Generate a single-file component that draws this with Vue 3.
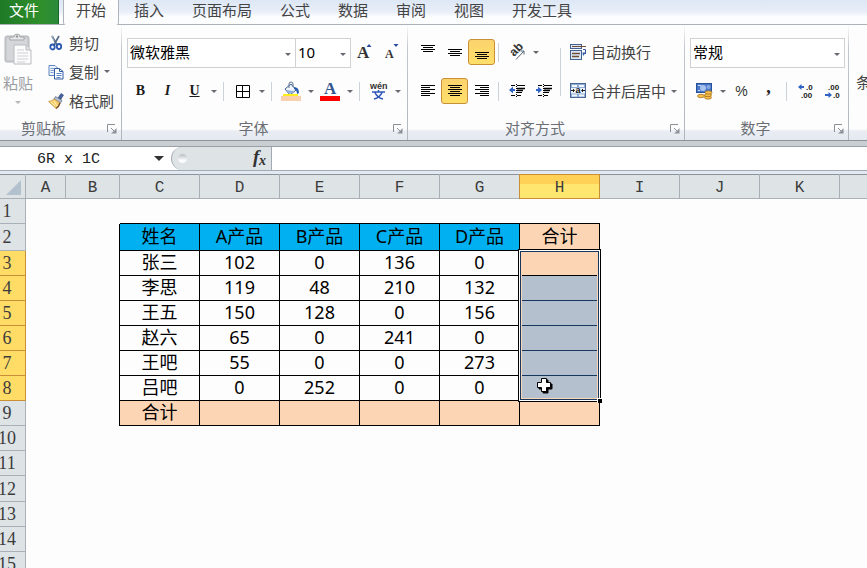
<script setup>
import { ref } from 'vue'

const tabs = ['开始', '插入', '页面布局', '公式', '数据', '审阅', '视图', '开发工具']
const activeTab = ref('开始')
const nameBox = ref('6R x 1C')
const formula = ref('')
const fontName = ref('微软雅黑')
const fontSize = ref('10')
const numberFormat = ref('常规')

const columns = ['A', 'B', 'C', 'D', 'E', 'F', 'G', 'H', 'I', 'J', 'K', 'L']
const data = {
  2: ['姓名', 'A产品', 'B产品', 'C产品', 'D产品', '合计'],
  3: ['张三', '102', '0', '136', '0', ''],
  4: ['李思', '119', '48', '210', '132', ''],
  5: ['王五', '150', '128', '0', '156', ''],
  6: ['赵六', '65', '0', '241', '0', ''],
  7: ['王吧', '55', '0', '0', '273', ''],
  8: ['吕吧', '0', '252', '0', '0', ''],
  9: ['合计', '', '', '', '', '']
}
const rowCount = 15

const isSelectedRow = (r) => r >= 3 && r <= 8
const inTable = (r, c) => r >= 2 && r <= 9 && c >= 2 && c <= 7
const cellText = (r, c) => (inTable(r, c) ? data[r][c - 2] : '')

function cellClass(r, c) {
  return {
    boxed: inTable(r, c),
    'edge-left': c === 1 && r >= 2 && r <= 9,
    'edge-top': r === 1 && c >= 2 && c <= 7,
    head: r === 2 && c >= 2 && c <= 6,
    total: inTable(r, c) && (r === 9 || (c === 7 && r <= 3)),
    picked: c === 7 && r >= 4 && r <= 8,
    anchor: c === 7 && (r === 3 || r === 8)
  }
}
</script>

<template>
  <div class="app">
    <nav class="tabs">
      <button class="file-tab">文件</button>
      <button
        v-for="t in tabs"
        :key="t"
        class="tab"
        :class="{ active: t === activeTab }"
        @click="activeTab = t"
      >{{ t }}</button>
    </nav>

    <div class="ribbon">
      <section class="group clipboard">
        <div class="body">
          <button class="paste">
            <svg width="28" height="32" viewBox="0 0 28 32">
              <rect x="1" y="3" width="24" height="26" rx="2" fill="#c9cbcf" stroke="#b4b6ba" />
              <rect x="3" y="6" width="20" height="21" fill="#d4d6d9" />
              <path d="M6 7V4h4q0-3 3-3t3 3h4v3z" fill="#e8e8ea" stroke="#a5a7ab" />
              <circle cx="13" cy="3.500" r="1.200" fill="#999" />
              <path d="M10 12h12l5 5v14H10z" fill="#fbfbfb" stroke="#babbc0" />
              <path d="M22 12v5h5" fill="#e2e2e5" stroke="#babbc0" />
              <path d="M13 17h7M13 20h11M13 23h11M13 26h11M13 29h8" stroke="#d0d1d5" />
            </svg>
            <span>粘贴</span>
            <i class="caret faint"></i>
          </button>
          <div class="stack">
            <button class="cmd">
              <svg width="16" height="16" viewBox="0 0 16 16">
                <path d="M4 1l5 9M11 1L6 10" stroke="#5b6e8c" stroke-width="1.800" fill="none" />
                <path d="M4 1l2 5" stroke="#a8b6c8" />
                <ellipse cx="4.500" cy="12" rx="2.200" ry="2.500" fill="none" stroke="#2c58ae" stroke-width="1.800" />
                <ellipse cx="11" cy="11.500" rx="2.200" ry="2.500" fill="none" stroke="#2c58ae" stroke-width="1.800" />
              </svg>
              <span>剪切</span>
            </button>
            <button class="cmd">
              <svg width="16" height="16" viewBox="0 0 16 16">
                <path d="M1 1.500h6l3 3v7H1z" fill="#eef4fc" stroke="#5f84bd" />
                <path d="M2.500 4.500h4M2.500 6.500h4M2.500 8.500h3" stroke="#7c9dcd" />
                <path d="M6.500 4.500h5l3.500 3v7.500H6.500z" fill="#fff" stroke="#2f5da4" />
                <path d="M11.500 4.500v3h3.500" fill="none" stroke="#2f5da4" />
                <path d="M8.500 9.500h5M8.500 11.500h5M8.500 13.500h4" stroke="#5a86c8" />
              </svg>
              <span>复制</span>
              <i class="caret"></i>
            </button>
            <button class="cmd">
              <svg width="16" height="16" viewBox="0 0 16 16">
                <path d="M10 5l3-4.500 2.500 1.500-3 5z" fill="#49639a" stroke="#2e437a" stroke-width=".6" />
                <path d="M7.500 3.500l6.500 4-1.500 2.500-6.500-4z" fill="#b8c0cf" stroke="#59647c" stroke-width=".7" />
                <path d="M6 6l6 4q-1 4-4 5.500L.5 8.500Q4 8 6 6z" fill="#f6cf6d" stroke="#c38b35" stroke-width=".7" />
                <path d="M3 9l4 4M6 8l3 5" stroke="#fff0b8" />
                <path d="M8 15.500q3-2 4-5.500" stroke="#7b522d" stroke-width="1.400" fill="none" />
              </svg>
              <span>格式刷</span>
            </button>
          </div>
        </div>
        <footer><span>剪贴板</span><svg class="launch" width="10" height="10" viewBox="0 0 10 10"><path d="M.5 8V.5H8M4 4l3 3" fill="none" stroke="#8b9097" /><path d="M9.500 4v5.500H4L7 7z" fill="#8b9097" /></svg></footer>
      </section>

      <section class="group font">
        <div class="body rows">
          <div class="line">
            <label class="combo wide">
              <select v-model="fontName" aria-label="字体"><option>微软雅黑</option></select>
            </label>
            <label class="combo size">
              <select v-model="fontSize" aria-label="字号"><option>10</option></select>
            </label>
            <button class="tool" aria-label="增大字号">
              <svg width="16" height="18" viewBox="0 0 16 18">
                <text x="0" y="15" class="serif" font-size="17">A</text>
                <path d="M9.500 4l2.500-3 2.500 3z" fill="#2d4a9a" />
              </svg>
            </button>
            <button class="tool" aria-label="减小字号">
              <svg width="14" height="18" viewBox="0 0 14 18">
                <text x="0" y="15" class="serif" font-size="12">A</text>
                <path d="M8.500 1l2.500 3 2.500-3z" fill="#2d4a9a" />
              </svg>
            </button>
          </div>
          <div class="line">
            <button class="tool letter"><b>B</b></button>
            <button class="tool letter"><em>I</em></button>
            <button class="tool letter"><u>U</u></button>
            <i class="drop"></i><i class="sep"></i>
            <button class="tool" aria-label="边框">
              <svg width="14" height="14" viewBox="0 0 14 14"><path d="M.5 1.500h13v12H.5zM6.500 1.500v12M.5 7.500h13" fill="none" stroke="#000" /></svg>
            </button>
            <i class="drop"></i><i class="sep"></i>
            <button class="tool swatch" aria-label="填充颜色">
              <svg width="20" height="20" viewBox="0 0 20 20">
                <path d="M4 8l6-5 5 6-6 5z" fill="#f2f6fc" stroke="#3f5f91" />
                <path d="M8 7V3q0-2 2-2t2 2v3" fill="none" stroke="#5e7090" />
                <path d="M13 6q5 0 5 6l-2 1q0-4-3-5z" fill="#285cae" />
                <path d="M5 9l8 1-4 3z" fill="#8fb0de" />
                <rect x="2" y="13" width="15" height="2" fill="#ffee20" />
                <rect y="15" width="20" height="5" fill="#fbd0ac" />
              </svg>
            </button>
            <i class="drop"></i>
            <button class="tool swatch" aria-label="字体颜色">
              <svg width="20" height="20" viewBox="0 0 20 20">
                <text x="4" y="13" class="serif blue" font-size="17">A</text>
                <rect y="15" width="20" height="5" fill="#fe0000" />
              </svg>
            </button>
            <i class="drop"></i><i class="sep"></i>
            <button class="tool" aria-label="拼音指南">
              <svg width="20" height="18" viewBox="0 0 20 18">
                <text x="1" y="7" font-size="9" font-family="Liberation Sans" font-weight="bold" fill="#333">wén</text>
                <path d="M3 10h13M9.500 8v2M6 10.500q2 5 8 6.500M13 10.500q-2 5-8 6.500" fill="none" stroke="#2e57b8" stroke-width="1.500" />
              </svg>
            </button>
            <i class="drop"></i>
          </div>
        </div>
        <footer><span>字体</span><svg class="launch" width="10" height="10" viewBox="0 0 10 10"><path d="M.5 8V.5H8M4 4l3 3" fill="none" stroke="#8b9097" /><path d="M9.500 4v5.500H4L7 7z" fill="#8b9097" /></svg></footer>
      </section>

      <section class="group align">
        <div class="body">
          <div class="rows">
            <div class="line">
              <button class="tool" aria-label="顶端对齐">
                <svg width="14" height="20" viewBox="0 0 14 20"><path d="M0 3.500h14M2 5.500h10M0 7.500h14M2 9.500h10" stroke="#000" /></svg>
              </button>
              <button class="tool" aria-label="垂直居中">
                <svg width="14" height="20" viewBox="0 0 14 20"><path d="M0 7.500h14M2 9.500h10M0 11.500h14M2 13.500h10" stroke="#000" /></svg>
              </button>
              <button class="tool on" aria-label="底端对齐">
                <svg width="14" height="20" viewBox="0 0 14 20"><path d="M0 10.500h14M2 12.500h10M0 14.500h14M2 16.500h10" stroke="#000" /></svg>
              </button>
              <i class="sep"></i>
              <button class="tool" aria-label="方向">
                <svg width="16" height="16" viewBox="0 0 16 16">
                  <text x="0" y="0" transform="translate(5 13) rotate(-45)" font-size="12" font-family="Liberation Sans" font-weight="bold" fill="#333">ab</text>
                  <path d="M7 15.500L15 7M11.500 7H15v3.500" fill="none" stroke="#5b6270" />
                </svg>
              </button>
              <i class="drop"></i>
            </div>
            <div class="line">
              <button class="tool" aria-label="左对齐">
                <svg width="14" height="14" viewBox="0 0 14 14"><path d="M0 1.500h14M0 3.500h9M0 5.500h14M0 7.500h9M0 9.500h14M0 11.500h9" stroke="#000" /></svg>
              </button>
              <button class="tool on" aria-label="居中">
                <svg width="14" height="14" viewBox="0 0 14 14"><path d="M0 1.500h14M2 3.500h10M0 5.500h14M2 7.500h10M0 9.500h14M2 11.500h10" stroke="#000" /></svg>
              </button>
              <button class="tool" aria-label="右对齐">
                <svg width="14" height="14" viewBox="0 0 14 14"><path d="M0 1.500h14M5 3.500h9M0 5.500h14M5 7.500h9M0 9.500h14M5 11.500h9" stroke="#000" /></svg>
              </button>
              <i class="sep"></i>
              <button class="tool" aria-label="减少缩进">
                <svg width="16" height="16" viewBox="0 0 16 16">
                  <path d="M2 2.500h4M8 2.500h8M2 12.500h4M8 12.500h4M8 9.500h5" stroke="#000" />
                  <path d="M8 5.500h8M8 7.500h6" stroke="#000" stroke-width="1.500" />
                  <path d="M7.500 1v14" stroke="#000" stroke-dasharray="1 1" />
                  <path d="M0 7l4-3.500V6h2v2H4v2.500z" fill="#2f63c4" />
                </svg>
              </button>
              <button class="tool" aria-label="增加缩进">
                <svg width="16" height="16" viewBox="0 0 16 16">
                  <path d="M2 2.500h4M8 2.500h8M2 12.500h4M8 12.500h4M8 9.500h5" stroke="#000" />
                  <path d="M8 5.500h8M8 7.500h6" stroke="#000" stroke-width="1.500" />
                  <path d="M7.500 1v14" stroke="#000" stroke-dasharray="1 1" />
                  <path d="M6 7L2 3.500V6H0v2h2v2.500z" fill="#2f63c4" />
                </svg>
              </button>
            </div>
          </div>
          <i class="sep tall"></i>
          <div class="rows merge">
            <button class="cmd">
              <svg width="16" height="16" viewBox="0 0 16 16">
                <rect x=".5" y=".5" width="11" height="4" fill="#dce7f6" stroke="#43608f" />
                <path d="M2 2.500h14" stroke="#70503a" />
                <rect x=".5" y="6.500" width="11" height="9" fill="#dce7f6" stroke="#43608f" />
                <path d="M2 9.500h8M2 12.500h7" stroke="#70503a" stroke-width="1.300" />
                <path d="M13 5.500h2.500v4.500" fill="none" stroke="#2e5aa8" />
                <path d="M12.500 8.500h3.500L13 12z" fill="#2e5aa8" />
              </svg>
              <span>自动换行</span>
            </button>
            <button class="cmd">
              <svg width="16" height="16" viewBox="0 0 16 16">
                <rect x=".5" y=".5" width="15" height="14" fill="#8facd6" stroke="#4a6796" />
                <path d="M2 2h5v2H2zM9 2h5v2H9zM2 11.500h5v2H2zM9 11.500h5v2H9z" fill="#f4f8fd" />
                <rect x="1" y="5" width="14" height="5.500" fill="#eaf1fa" />
                <path d="M1 7.500h3M12 7.500h3M3 6l1.500 1.500L3 9M13 6l-1.500 1.500L13 9" fill="none" stroke="#222" />
                <text x="5.500" y="10" font-size="9" font-family="Liberation Sans" font-weight="bold" fill="#111">a</text>
              </svg>
              <span>合并后居中</span>
              <i class="caret"></i>
            </button>
          </div>
        </div>
        <footer><span>对齐方式</span><svg class="launch" width="10" height="10" viewBox="0 0 10 10"><path d="M.5 8V.5H8M4 4l3 3" fill="none" stroke="#8b9097" /><path d="M9.500 4v5.500H4L7 7z" fill="#8b9097" /></svg></footer>
      </section>

      <section class="group number">
        <div class="body rows">
          <div class="line">
            <label class="combo full">
              <select v-model="numberFormat" aria-label="数字格式"><option>常规</option></select>
            </label>
          </div>
          <div class="line">
            <button class="tool" aria-label="会计数字格式">
              <svg width="18" height="18" viewBox="0 0 18 18">
                <rect x="1.500" y="1.500" width="15" height="9" fill="#4a78c9" stroke="#27509a" />
                <circle cx="8" cy="6" r="3" fill="#a8c3ee" /><circle cx="13.500" cy="5" r="2" fill="#86a9e2" />
                <path d="M3 3.500h3M3 8.500h2" stroke="#c9dbf7" />
                <g fill="#f5c04a" stroke="#9c6415" stroke-width=".7">
                  <ellipse cx="13" cy="15.500" rx="3.500" ry="1.700" /><ellipse cx="13" cy="13" rx="3.500" ry="1.700" />
                  <ellipse cx="13.500" cy="10.500" rx="3.500" ry="1.700" /><ellipse cx="6" cy="14" rx="3.500" ry="1.700" />
                </g>
              </svg>
            </button>
            <i class="drop"></i>
            <button class="tool percent">%</button>
            <button class="tool comma">,</button>
            <i class="sep"></i>
            <button class="tool" aria-label="增加小数位数">
              <svg width="16" height="16" viewBox="0 0 16 16">
                <text x="8" y="7" class="digits">.0</text><text x="3" y="15" class="digits">.00</text>
                <path d="M0 4l3.500-3v2H6v2H3.500v2z" fill="#2f63c4" />
              </svg>
            </button>
            <button class="tool" aria-label="减少小数位数">
              <svg width="16" height="16" viewBox="0 0 16 16">
                <text x="3" y="7" class="digits">.00</text><text x="8" y="15" class="digits">.0</text>
                <path d="M7 12L3.500 9v2H0v2h3.500v2z" fill="#2f63c4" />
              </svg>
            </button>
          </div>
        </div>
        <footer><span>数字</span><svg class="launch" width="10" height="10" viewBox="0 0 10 10"><path d="M.5 8V.5H8M4 4l3 3" fill="none" stroke="#8b9097" /><path d="M9.500 4v5.500H4L7 7z" fill="#8b9097" /></svg></footer>
      </section>

      <section class="group styles">
        <div class="body"><button class="conditional">条</button></div>
        <footer></footer>
      </section>
    </div>

    <div class="formula-bar">
      <div class="name-box">
        <input v-model="nameBox" aria-label="名称框" />
        <i class="arrow"></i>
      </div>
      <div class="fx">
        <i class="knob"></i>
        <svg width="18" height="18" viewBox="0 0 18 18">
          <text x="4" y="13" class="fx-text" font-size="19">f</text>
          <text x="10" y="15" class="fx-text" font-size="14">x</text>
        </svg>
      </div>
      <input v-model="formula" class="formula" aria-label="编辑栏" />
    </div>

    <main class="sheet">
      <table>
        <colgroup>
          <col class="w-row" /><col class="w-a" /><col class="w-b" />
          <col v-for="c in 10" :key="c" class="w-col" />
        </colgroup>
        <thead>
          <tr>
            <th class="corner"><i></i></th>
            <th v-for="c in columns" :key="c" :class="{ lit: c === 'H' }">{{ c }}</th>
          </tr>
        </thead>
        <tbody>
          <tr v-for="r in rowCount" :key="r" :class="{ title: r === 2, roomy: r === 12 }">
            <th :class="{ lit: isSelectedRow(r) }"><span>{{ r }}</span></th>
            <td v-for="(c, i) in columns" :key="c" :class="cellClass(r, i)">
              {{ cellText(r, i) }}
              <div v-if="r === 3 && c === 'H'" class="selection"></div>
              <svg v-if="r === 8 && c === 'H'" class="cursor" width="16" height="16" viewBox="0 0 16 16">
                <path d="M6 2h5v4h4v5h-4v4H6v-4H2V6h4z" fill="#000" stroke="#000" />
                <path d="M4.500 .5h5v4h4v5h-4v4h-5v-4h-4v-5h4z" fill="#fff" stroke="#000" />
              </svg>
            </td>
          </tr>
        </tbody>
      </table>
    </main>
  </div>
</template>

<style>
body {
  overflow: hidden;
}
</style>

<style scoped>
.app {
  display: flex;
  flex-direction: column;
  height: 100vh;
  overflow: hidden;
  background: #fdfdfd;
  color: #444;
  font: 15px/20px "Noto Sans CJK SC", sans-serif;
}
button {
  border: 0;
  padding: 0;
  background: none;
  color: inherit;
  font: inherit;
  white-space: nowrap;
}
svg {
  display: block;
  flex: none;
  overflow: visible;
}

/* tabs */
.tabs {
  display: flex;
  flex: none;
  height: 25px;
  box-sizing: border-box;
  border-bottom: 1px solid #aeb3b9;
  background: linear-gradient(#dde7f5, #e9eff9 50%, #fcfdfe 70%);
}
.tab,
.file-tab {
  height: 24px;
  padding: 0 14px 6px;
}
.file-tab {
  width: 59px;
  margin-right: 4px;
  padding: 0 20px 6px 9px;
  background: linear-gradient(90deg, #1f7a26, #2f8f2b 70%, #2a8a3c);
  box-shadow: inset -1px 0 #17692a;
  color: #fff;
}
.tab.active {
  height: 25px;
  padding: 0 12px 7px;
  border: solid #aeb3b9;
  border-width: 0 1px;
  border-radius: 0 0 3px 3px;
  background: #fdfdfd;
}
.tab.active + .tab {
  padding-left: 15px;
}

/* ribbon */
.ribbon {
  display: flex;
  flex: none;
  height: 116px;
  background: linear-gradient(#fdfdfd 104px, #e9edf3 106px, #e4e9f0);
}
.group {
  display: flex;
  flex: none;
  flex-direction: column;
  box-sizing: border-box;
  border-right: 1px solid;
  border-image: linear-gradient(#fdfdfd, #c3c8ce 20%, #b0b5bb) 1;
}
.clipboard {
  width: 122px;
}
.font {
  width: 286px;
}
.align {
  width: 277px;
}
.number {
  width: 164px;
}
.styles {
  flex: 1;
  border: 0;
}
.body {
  display: flex;
  flex: 1;
}
.group footer {
  display: flex;
  align-items: center;
  height: 24px;
  color: #6b6f75;
}
.group footer span {
  flex: 1;
  margin-right: 8px;
  padding-bottom: 2px;
  text-align: center;
}
.launch {
  margin-right: 4px;
}
.clipboard footer span {
  margin-right: 20px;
}
.rows {
  display: flex;
  flex-direction: column;
  gap: 9px;
  padding-top: 12px;
}
.line {
  display: flex;
  align-items: center;
  height: 30px;
}
.font .body,
.number .body {
  padding-left: 5px;
}
.align .rows {
  padding-left: 6px;
}
.paste {
  display: flex;
  flex-direction: column;
  align-items: center;
  width: 36px;
  padding-top: 8px;
  color: #9b9da1;
}
.paste span {
  margin: 8px 0;
}
.stack {
  display: flex;
  flex-direction: column;
  padding: 3px 0 0 12px;
}
.cmd {
  display: flex;
  align-items: center;
  gap: 5px;
  height: 29px;
}
.caret,
.drop::before,
.combo::after {
  content: "";
  width: 0;
  border: solid transparent;
  border-width: 3px 3px 0;
  border-top-color: #666a70;
}
.caret.faint {
  border-top-color: #b5b7ba;
}
.tool {
  display: flex;
  flex: none;
  align-items: center;
  justify-content: center;
  box-sizing: border-box;
  width: 27px;
  height: 26px;
}
.swatch {
  width: 28px;
}
.tool.on {
  border: 1px solid #c98f36;
  border-radius: 3px;
  background: linear-gradient(#fbd36e, #ffdf6a);
}
.drop {
  display: flex;
  flex: none;
  align-items: center;
  justify-content: center;
  width: 11px;
  height: 26px;
}
.sep {
  flex: none;
  width: 1px;
  height: 19px;
  margin: 0 5px 0 4px;
  background: #ccd2da;
}
.align .line .sep {
  margin: 0 4px 0 3px;
}
.sep.tall {
  height: 48px;
  margin: 23px 0 0 3px;
}
.letter {
  color: #1a1a1a;
  font: 14px/18px "Liberation Serif", serif;
}
.letter b,
.letter u,
.letter em {
  font-weight: bold;
}
.combo {
  position: relative;
  display: flex;
  align-self: flex-start;
  flex: none;
  box-sizing: border-box;
  height: 30px;
  margin-top: 1px;
  border: 1px solid #cfd1d4;
  background: #fff;
}
.combo select {
  width: 100%;
  border: 0;
  padding: 0 2px 3px;
  appearance: none;
  background: none;
  color: #000;
  font: 15px/20px "Noto Sans", "Noto Sans CJK SC", sans-serif;
}
.combo::after {
  position: absolute;
  top: 14px;
  right: 4px;
}
.wide {
  width: 169px;
}
.size {
  width: 56px;
  margin-left: -1px;
}
.full {
  width: 155px;
}
.merge .cmd {
  height: 30px;
}
.align .merge {
  padding-left: 9px;
}
.percent {
  color: #333;
  font: 14px/20px "Liberation Sans", sans-serif;
}
.comma {
  padding-bottom: 8px;
  color: #222;
  font: bold 18px/18px "Liberation Serif", serif;
}
.serif {
  fill: #333;
  font-family: "Liberation Serif", serif;
  font-weight: bold;
}
.serif.blue {
  fill: #33568f;
}
.digits {
  fill: #222;
  font: bold 8px "Liberation Sans", sans-serif;
}
.conditional {
  width: 15px;
  margin-left: 7px;
  padding-top: 22px;
}

/* formula bar */
.formula-bar {
  display: flex;
  flex: none;
  height: 34px;
  box-sizing: border-box;
  border: solid;
  border-width: 5px 0 4px;
  border-color: #c9ced3 transparent #e3e9f2;
  background: #fff;
  box-shadow: inset 0 1px #9a9fa5, inset 0 -1px #a3a9b2, 0 -1px #8f949a;
}
.name-box {
  display: flex;
  align-items: center;
  width: 171px;
}
.name-box input,
.formula {
  min-width: 0;
  flex: 1;
  border: 0;
  padding: 0;
  background: none;
  color: #222;
  font: 15px/20px "Liberation Mono", monospace;
}
.name-box input {
  padding: 2px 0 0 37px;
}
.arrow {
  margin-right: 7px;
  border: solid transparent;
  border-width: 5px 5px 0;
  border-top-color: #333;
}
.fx {
  display: flex;
  align-items: center;
  justify-content: space-between;
  box-sizing: border-box;
  width: 101px;
  margin: 1px 0;
  padding: 0 4px 0 6px;
  border: 1px solid #a3a9b2;
  border-width: 0 1px;
  border-radius: 12px 0 0 12px;
  background: #dee3e6;
}
.knob {
  width: 9px;
  height: 9px;
  border-radius: 5px;
  background: linear-gradient(#b5bbc1, #fbfcfd 70%);
}
.fx-text {
  fill: #333;
  font-family: "Liberation Serif", serif;
  font-style: italic;
  font-weight: bold;
}

/* sheet */
.sheet {
  flex: 1;
  min-height: 0;
  margin-top: -1px;
  overflow: hidden;
}
table {
  width: 920px;
  border-spacing: 0;
  table-layout: fixed;
  line-height: 20px;
}
.w-row {
  width: 26px;
}
.w-a {
  width: 40px;
}
.w-b {
  width: 54px;
}
.w-col {
  width: 80px;
}
th,
td {
  box-sizing: border-box;
  height: 25px;
  padding: 0;
  text-align: center;
}
th {
  border: solid #a9b0b7;
  border-width: 0 1px 1px 0;
  background: #dee3e6;
  color: #3c3c3c;
  font: 18px/20px "Liberation Serif", serif;
}
thead th {
  padding-top: 3px;
  box-shadow: inset 0 1px #8c9299;
  font: 16px/20px "Liberation Mono", monospace;
}
.corner i {
  display: block;
  margin-left: 6px;
  width: 0;
  border: solid transparent;
  border-width: 0 0 15px 15px;
  border-bottom-color: #b3c0cd;
}
tbody th span {
  display: flex;
  justify-content: center;
  margin: 0 0 0 -11px;
}
th.lit {
  border-color: #c98f36;
  background: #ffdc66;
}
thead th.lit {
  background: linear-gradient(#ffd257 40%, #ffe66e 42%);
  box-shadow: inset 0 1px #c98f36, -1px 0 #c98f36;
}
.title th,
.title td {
  height: 27px;
}
.roomy th,
.roomy td {
  height: 26px;
}
td {
  padding-bottom: 2px;
  color: #000;
  font: 18px/20px "Noto Sans", "Noto Sans CJK SC", sans-serif;
}
.boxed {
  border: solid #000;
  border-width: 0 1px 1px 0;
}
.edge-left {
  border-right: 1px solid #000;
}
.edge-top {
  border-bottom: 1px solid #000;
}
.head {
  background: #00b0f0;
}
.total {
  background: #fcd5b4;
}
.picked {
  border-bottom-color: #17375e;
  background: #b4c0cd;
}
.anchor {
  position: relative;
}
.selection {
  position: absolute;
  z-index: 1;
  top: 0;
  left: 0;
  box-sizing: border-box;
  width: 100%;
  height: 149px;
  border: 1px solid #17375e;
  box-shadow: 0 0 0 1px #fff, 0 0 0 2px #000, inset 0 0 0 1px #fcd5b4;
}
.selection::after {
  content: "";
  position: absolute;
  right: -4px;
  bottom: -4px;
  width: 4px;
  height: 4px;
  border: solid #fff;
  border-width: 1px 0 0 1px;
  background: #000;
}
.cursor {
  position: absolute;
  z-index: 2;
  top: 2px;
  left: 17px;
}
</style>
